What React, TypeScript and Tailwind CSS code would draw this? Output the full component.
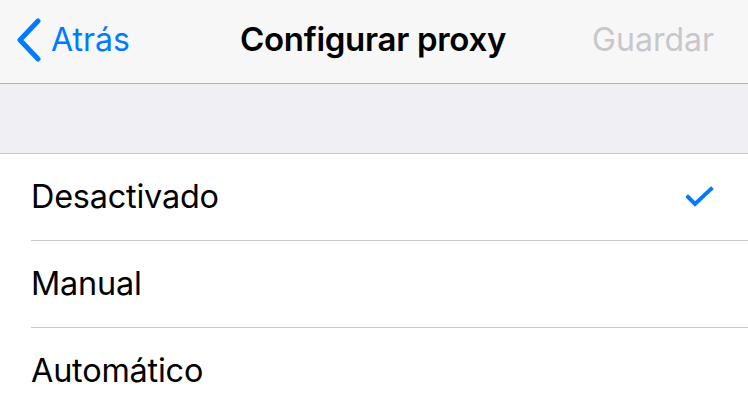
const font = { fontFamily: "Inter, 'Noto Sans', sans-serif" };

function Row({ label, checked, last }: { label: string; checked?: boolean; last?: boolean }) {
  return (
    <div className="pl-[31px]">
      <div
        className={`h-[87px] flex items-center justify-between pr-[34px] ${
          last ? "" : "border-b border-[#c8c7cc]"
        }`}
      >
        <span className="text-[32.4px] text-black tracking-[-0.2px]">{label}</span>
        {checked && (
          <svg width="28" height="22" viewBox="0 0 28 22" fill="none">
            <path
              d="M2 11 L9 18 L25 3"
              stroke="#007aff"
              strokeWidth="4"
              strokeLinecap="square"
            />
          </svg>
        )}
      </div>
    </div>
  );
}

export default function App() {
  return (
    <div className="w-[748px] h-[416px] bg-white overflow-hidden" style={font}>
      <div className="h-[84px] bg-[#f7f7f7] border-b border-[#b2b2b2] flex items-center justify-between px-[16px] pr-[34px] pb-[4px]">
        <div className="flex items-center gap-[9px] w-[216px]">
          <svg width="26" height="44" viewBox="0 0 26 44" fill="none">
            <path
              d="M22 3 L4 22 L22 41"
              stroke="#007aff"
              strokeWidth="5"
              strokeLinecap="round"
              strokeLinejoin="round"
            />
          </svg>
          <span className="text-[32px] text-[#007aff]">Atrás</span>
        </div>
        <span className="text-[33px] font-semibold text-black tracking-[-0.3px]">
          Configurar proxy
        </span>
        <div className="w-[200px] flex justify-end">
          <span className="text-[32px] text-[#c7c7cc]">Guardar</span>
        </div>
      </div>
      <div className="h-[70px] bg-[#efeff4] border-b border-[#c8c7cc]" />
      <Row label="Desactivado" checked />
      <Row label="Manual" />
      <Row label="Automático" last />
    </div>
  );
}
